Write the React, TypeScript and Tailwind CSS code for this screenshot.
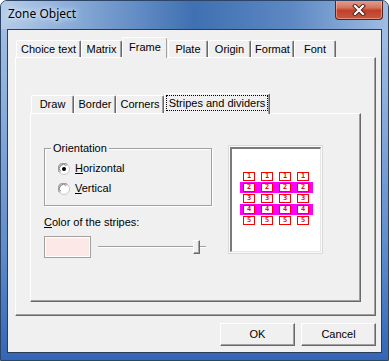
import React from "react";

const ui = "font-['Liberation_Sans',Arial,sans-serif] text-[11px] leading-[13px] text-black";

function Radio({ checked }: { checked?: boolean }) {
  return (
    <svg width="12" height="12" viewBox="0 0 12 12" className="shrink-0">
      <circle cx="6" cy="6" r="5.5" fill="#fff" stroke="#c8c8c8" />
      <path d="M1.6 9.4 A4.8 4.8 0 0 1 9.4 1.6" stroke="#8a8a8a" fill="none" strokeWidth="1" />
      <path d="M2.6 8.4 A3.6 3.6 0 0 1 8.4 2.6" stroke="#5a5a5a" fill="none" strokeWidth="0.8" />
      {checked && <circle cx="6" cy="6" r="2" fill="#000" />}
    </svg>
  );
}

function PreviewBox({ n }: { n: number }) {
  return (
    <div className="w-[12px] h-[9px] border border-[#ff0000] bg-white flex items-center justify-center text-[7px] leading-[7px] font-bold text-[#ff0000] font-['DejaVu_Sans_Mono',monospace]">
      {n}
    </div>
  );
}

function PreviewRow({ n, stripe }: { n: number; stripe?: boolean }) {
  return (
    <div className={stripe ? "h-[11px] w-[73px] bg-[#ff00ff] flex items-center justify-center gap-[6px]" : "h-[11px] w-[73px] flex items-center justify-center gap-[6px]"}>
      <PreviewBox n={n} />
      <PreviewBox n={n} />
      <PreviewBox n={n} />
      <PreviewBox n={n} />
    </div>
  );
}

export default function App() {
  const tabBase =
    "flex items-center justify-center border-t border-l border-t-white border-l-white border-r border-r-[#696969] shadow-[inset_-1px_0_#a0a0a0] rounded-tl-[2px] rounded-tr-[2px]";
  const tabUn = tabBase + " h-[17px]";
  const tabSel = tabBase + " relative z-10 h-[21px] -mb-px bg-[#f0f0f0]";
  const tabUn2 = tabBase + " h-[18px]";

  return (
    <div className={"w-[389px] h-[361px] bg-white " + ui}>
      <div className="relative w-full h-full rounded-t-[7px] border border-[#2c4466] bg-[linear-gradient(180deg,#a7c3e6_0%,#8fb1dd_25%,#5d8bcb_70%,#3466b6_100%)] flex flex-col overflow-hidden">
        {/* title bar */}
        <div className="h-[28px] shrink-0 flex items-start justify-between bg-[linear-gradient(90deg,#b6cde9_0%,#86a9d6_20%,#3f70b2_50%,#5d88c3_75%,#9fbde3_100%)]">
          <div className="pl-[7px] pt-[5px] font-['Noto_Sans',sans-serif] text-[12px] leading-[16px] text-black [text-shadow:0_0_8px_#e8f0fa,0_0_4px_#e8f0fa]">
            Zone Object
          </div>
          <div className="-mt-px mr-[5px] w-[48px] h-[20px] rounded-b-[4px] border border-[#5b2219] border-t-0 bg-[linear-gradient(180deg,#e6a38f_0%,#d37560_40%,#c0402a_55%,#c55a40_100%)] shadow-[inset_0_0_0_1px_rgba(255,200,190,0.5)] flex items-center justify-center">
            <svg width="14" height="12" viewBox="0 0 14 12">
              <path d="M3 2 L11 10 M11 2 L3 10" stroke="#4a1c14" strokeWidth="4" strokeLinecap="square" />
              <path d="M3 2 L11 10 M11 2 L3 10" stroke="#ffffff" strokeWidth="2.2" strokeLinecap="square" />
            </svg>
          </div>
        </div>

        {/* client */}
        <div className="mx-[6px] mb-[7px] flex-1 border border-[#2a3c58] bg-[#f0f0f0] flex flex-col">
          <div className="pl-[7px] pt-[7px] flex flex-col">
            {/* main tabs */}
            <div className="h-[20px] flex items-end pl-[1px]">
              <div className={tabUn + " w-[65px]"}>Choice text</div>
              <div className={tabUn + " w-[41px]"}>Matrix</div>
              <div className={tabSel + " w-[45px] border-r-0 shadow-[inset_-1px_0_#a0a0a0,1px_0_#696969]"}>
                <span className="-mt-[2px]">Frame</span>
              </div>
              <div className={tabUn + " w-[40px] ml-px"}>Plate</div>
              <div className={tabUn + " w-[43px]"}>Origin</div>
              <div className={tabUn + " w-[43px]"}>Format</div>
              <div className={tabUn + " w-[42px]"}>Font</div>
            </div>
            {/* main panel */}
            <div className="w-[361px] h-[259px] border border-t-white border-l-white border-r-[#696969] border-b-[#696969] shadow-[inset_-1px_-1px_#a0a0a0] flex flex-col pl-[14px] pt-[35px]">
              {/* inner tabs */}
              <div className="h-[20px] flex items-end pl-[1px]">
                <div className={tabUn2 + " w-[43px]"}>Draw</div>
                <div className={tabUn2 + " w-[42px]"}>Border</div>
                <div className={tabUn2 + " w-[48px]"}>Corners</div>
                <div className={tabSel + " w-[106px]"}>
                  <span className="-mt-[2px] border border-dotted border-black px-[2px] leading-[14px]">Stripes and dividers</span>
                </div>
              </div>
              {/* inner panel */}
              <div className="w-[331px] h-[189px] border border-t-white border-l-white border-r-[#696969] border-b-[#696969] shadow-[inset_-1px_-1px_#a0a0a0] flex pl-[13px]">
                <div className="w-[168px] flex flex-col pt-[34px]">
                  {/* group box */}
                  <div className="relative w-[168px] h-[58px] border border-[#a0a0a0] shadow-[inset_1px_1px_#fff,1px_1px_#fff] flex flex-col pl-[13px] pt-[13px] gap-[7px]">
                    <span className="absolute -top-[7px] left-[6px] bg-[#f0f0f0] px-[2px]">Orientation</span>
                    <div className="flex items-center gap-[5px] h-[13px]">
                      <Radio checked />
                      <span>
                        <span className="underline underline-offset-[1px]">H</span>orizontal
                      </span>
                    </div>
                    <div className="flex items-center gap-[5px] h-[13px]">
                      <Radio />
                      <span>
                        <span className="underline underline-offset-[1px]">V</span>ertical
                      </span>
                    </div>
                  </div>
                  <div className="mt-[10px]">
                    <span className="underline underline-offset-[1px]">C</span>olor of the stripes:
                  </div>
                  <div className="mt-[7px] flex items-center">
                    <div className="w-[47px] h-[22px] border border-[#a0a0a0] shadow-[inset_1px_1px_#fff,inset_-1px_-1px_#fff] bg-[#fde8e8]" />
                    <div className="relative ml-[7px] w-[108px] h-[2px] border-t border-t-[#a0a0a0] border-b border-b-white">
                      <div className="absolute left-[95px] -top-[7px] w-[7px] h-[14px] bg-[#f0f0f0] border border-t-white border-l-white border-r-[#696969] border-b-[#696969] shadow-[inset_-1px_-1px_#a0a0a0]" />
                    </div>
                  </div>
                </div>
                {/* preview */}
                <div className="ml-[16px] mt-[31px] w-[95px] h-[109px] border border-[#dadada] bg-[#fbfbfb] p-[1px] flex">
                  <div className="flex-1 border-t-2 border-l-2 border-[#7a7a7a] border-r border-b border-r-[#e6e6e6] border-b-[#e6e6e6] bg-white flex flex-col items-center pt-[22px]">
                    <PreviewRow n={1} />
                    <PreviewRow n={2} stripe />
                    <PreviewRow n={3} />
                    <PreviewRow n={4} stripe />
                    <PreviewRow n={5} />
                  </div>
                </div>
              </div>
            </div>
          </div>
          {/* buttons */}
          <div className="mt-[7px] flex justify-end gap-[6px] pr-[5px]">
            <div className="w-[75px] h-[23px] flex items-center justify-center border border-t-white border-l-white border-r-[#696969] border-b-[#696969] shadow-[inset_-1px_-1px_#a0a0a0]">OK</div>
            <div className="w-[75px] h-[23px] flex items-center justify-center border border-t-white border-l-white border-r-[#696969] border-b-[#696969] shadow-[inset_-1px_-1px_#a0a0a0]">Cancel</div>
          </div>
        </div>
      </div>
    </div>
  );
}
